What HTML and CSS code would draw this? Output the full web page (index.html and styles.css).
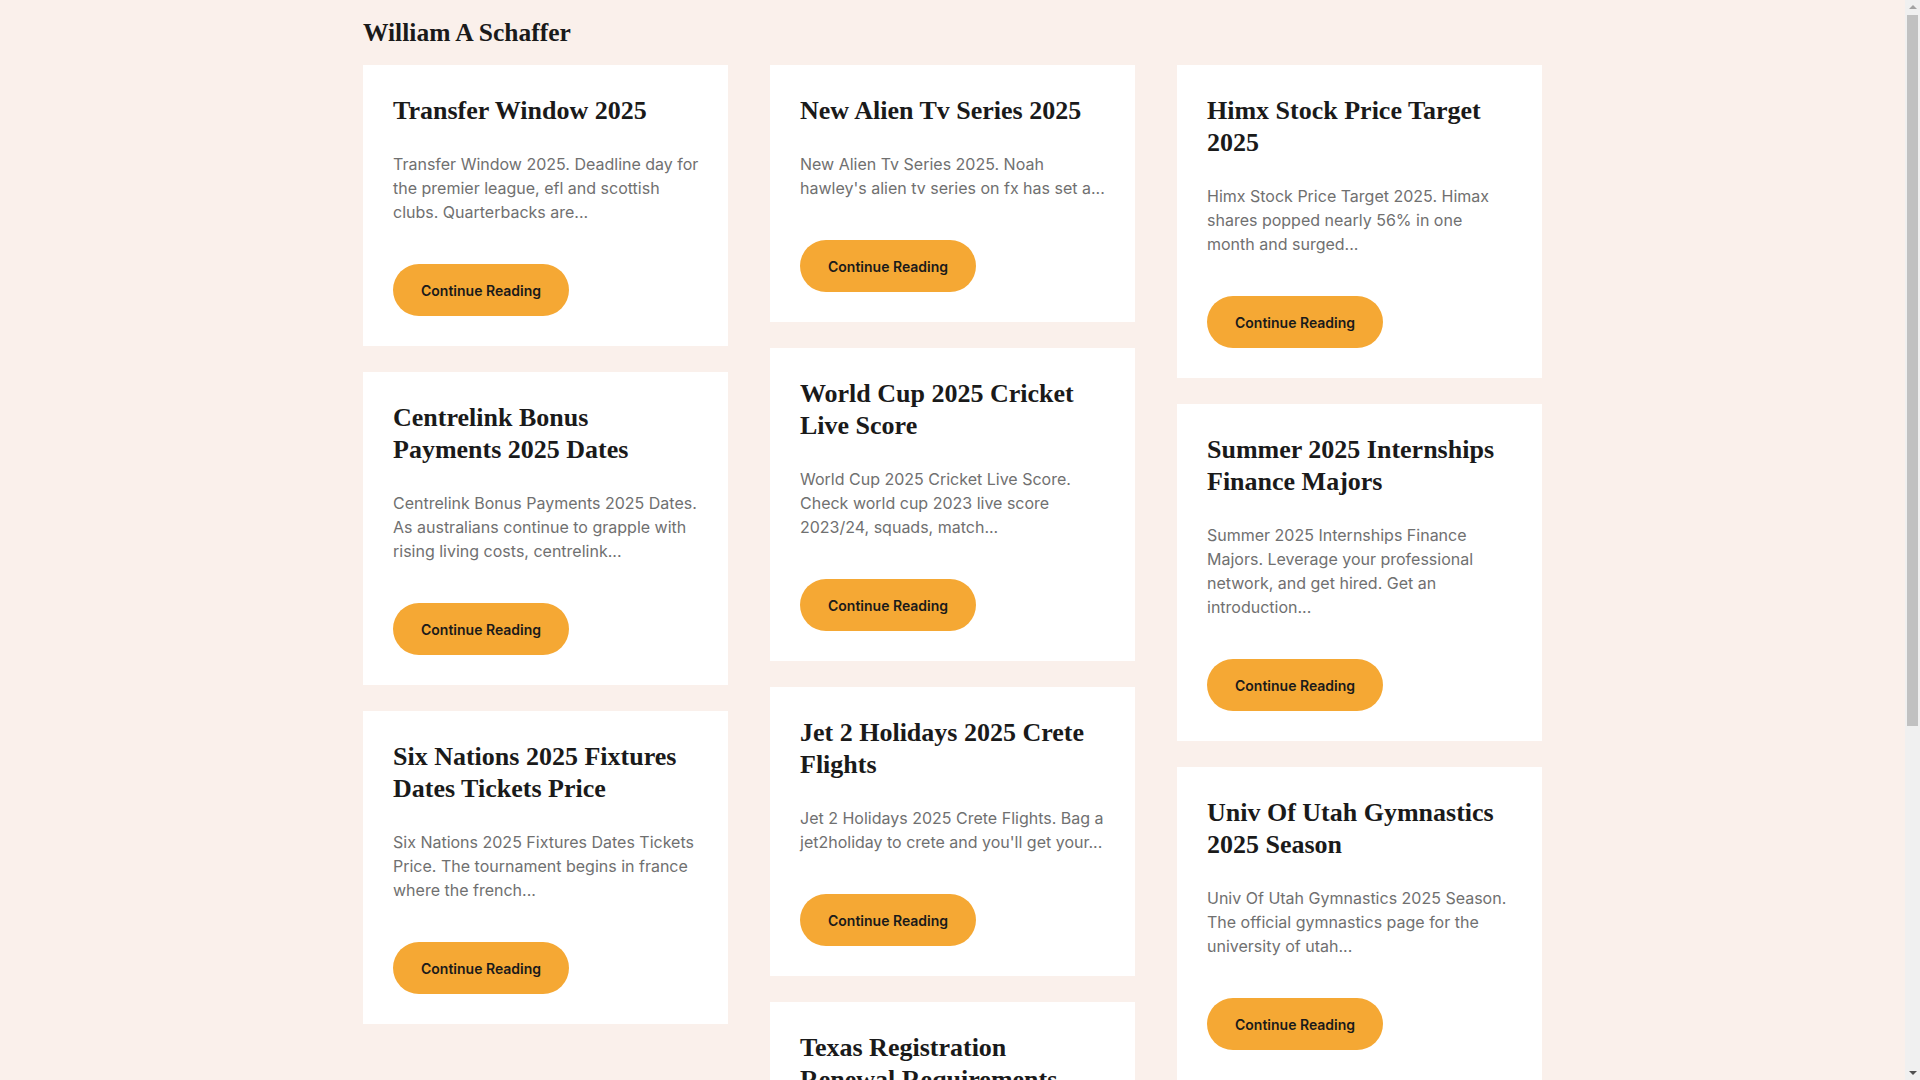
FILE: index.html
```html
<!DOCTYPE html>
<html lang="en">
<head>
<meta charset="utf-8">
<title>William A Schaffer</title>
<link rel="stylesheet" href="styles.css">
</head>
<body>
<div class="page">
  <header class="site-header">
    <h1 class="site-title">William A Schaffer</h1>
  </header>
  <main class="grid">
    <div class="column">
      <article class="card">
        <h2 class="card-title">Transfer Window 2025</h2>
        <p class="card-text">Transfer Window 2025. Deadline day for the premier league, efl and scottish clubs. Quarterbacks are...</p>
        <a class="btn" href="#">Continue Reading</a>
      </article>
      <article class="card">
        <h2 class="card-title">Centrelink Bonus<br>Payments 2025 Dates</h2>
        <p class="card-text">Centrelink Bonus Payments 2025 Dates. As australians continue to grapple with rising living costs, centrelink...</p>
        <a class="btn" href="#">Continue Reading</a>
      </article>
      <article class="card">
        <h2 class="card-title">Six Nations 2025 Fixtures<br>Dates Tickets Price</h2>
        <p class="card-text">Six Nations 2025 Fixtures Dates Tickets Price. The tournament begins in france where the french...</p>
        <a class="btn" href="#">Continue Reading</a>
      </article>
    </div>
    <div class="column">
      <article class="card">
        <h2 class="card-title">New Alien Tv Series 2025</h2>
        <p class="card-text">New Alien Tv Series 2025. Noah hawley's alien tv series on fx has set a...</p>
        <a class="btn" href="#">Continue Reading</a>
      </article>
      <article class="card">
        <h2 class="card-title">World Cup 2025 Cricket<br>Live Score</h2>
        <p class="card-text">World Cup 2025 Cricket Live Score. Check world cup 2023 live score 2023/24, squads, match...</p>
        <a class="btn" href="#">Continue Reading</a>
      </article>
      <article class="card">
        <h2 class="card-title">Jet 2 Holidays 2025 Crete<br>Flights</h2>
        <p class="card-text">Jet 2 Holidays 2025 Crete Flights. Bag a jet2holiday to crete and you'll get your...</p>
        <a class="btn" href="#">Continue Reading</a>
      </article>
      <article class="card">
        <h2 class="card-title">Texas Registration<br>Renewal Requirements</h2>
        <p class="card-text">Texas Registration Renewal Requirements. Renew your vehicle registration online, by mail or in person...</p>
        <a class="btn" href="#">Continue Reading</a>
      </article>
    </div>
    <div class="column">
      <article class="card">
        <h2 class="card-title">Himx Stock Price Target<br>2025</h2>
        <p class="card-text">Himx Stock Price Target 2025. Himax shares popped nearly 56% in one month and surged...</p>
        <a class="btn" href="#">Continue Reading</a>
      </article>
      <article class="card">
        <h2 class="card-title">Summer 2025 Internships<br>Finance Majors</h2>
        <p class="card-text">Summer 2025 Internships Finance Majors. Leverage your professional network, and get hired. Get an introduction...</p>
        <a class="btn" href="#">Continue Reading</a>
      </article>
      <article class="card">
        <h2 class="card-title">Univ Of Utah Gymnastics<br>2025 Season</h2>
        <p class="card-text">Univ Of Utah Gymnastics 2025 Season. The official gymnastics page for the university of utah...</p>
        <a class="btn" href="#">Continue Reading</a>
      </article>
    </div>
  </main>
</div>
<div class="scrollbar" aria-hidden="true">
  <span class="sb-arrow sb-up"></span>
  <span class="sb-thumb"></span>
  <span class="sb-arrow sb-down"></span>
</div>
</body>
</html>
```

FILE: styles.css
```css
html, body {
  margin: 0;
  padding: 0;
}

body {
  background: #faf0eb;
  color: #1a1a1a;
  font-family: Inter, "Liberation Sans", sans-serif;
  padding-right: 15px;
}

.page {
  width: 1179px;
  margin: 0 auto;
  padding-bottom: 40px;
}

.site-header {
  padding-top: 17px;
}

.site-title {
  margin: 0 0 16px;
  font-family: "Liberation Serif", serif;
  font-weight: 700;
  font-size: 25.5px;
  line-height: 32px;
  color: #1a1a1a;
}

.grid {
  display: flex;
  gap: 42px;
  align-items: flex-start;
}

.column {
  flex: 0 0 365px;
  display: flex;
  flex-direction: column;
  gap: 26px;
}

.card {
  background: #ffffff;
  padding: 30px 29px 30px 30px;
}

.card-title {
  margin: 0 0 25px;
  font-family: "Liberation Serif", serif;
  font-weight: 700;
  font-size: 26px;
  line-height: 32px;
  color: #1a1a1a;
}

.card-text {
  margin: 0 0 40px;
  font-size: 16px;
  line-height: 24px;
  color: #707070;
}

.btn {
  display: inline-flex;
  align-items: center;
  justify-content: center;
  height: 52px;
  padding: 0 28px;
  border-radius: 26px;
  background: #f5a834;
  color: #1a1a1a;
  font-size: 14px;
  font-weight: 600;
  text-decoration: none;
  vertical-align: top;
}

/* simulated browser scrollbar overlay */
.scrollbar {
  position: fixed;
  top: 0;
  right: 0;
  width: 15px;
  height: 100vh;
  background: #f0f0f0;
}

.sb-thumb {
  position: absolute;
  left: 2px;
  top: 15px;
  width: 11px;
  height: 711px;
  background: #c1c1c1;
}

.sb-arrow {
  position: absolute;
  left: 4px;
  width: 0;
  height: 0;
  border-left: 4px solid transparent;
  border-right: 4px solid transparent;
}

.sb-up {
  top: 5px;
  border-bottom: 4px solid #a3a3a3;
}

.sb-down {
  bottom: 5px;
  border-top: 4px solid #505050;
}
```
